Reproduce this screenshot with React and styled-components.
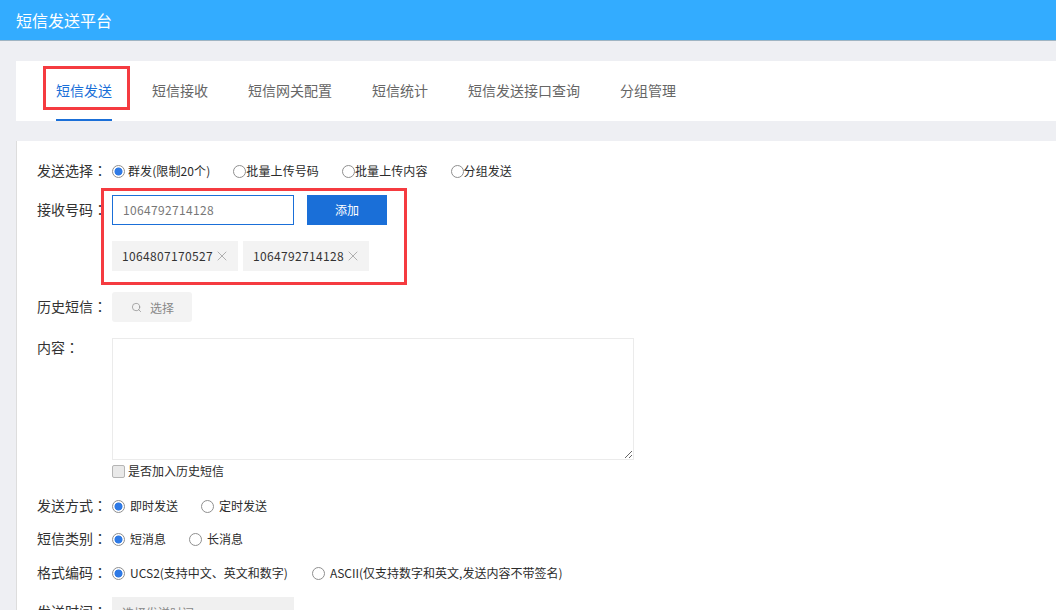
import React from "react";
import styled, { createGlobalStyle } from "styled-components";
import { Search, X } from "lucide-react";

const GlobalStyle = createGlobalStyle`
  html, body {
    margin: 0;
    height: 610px;
    overflow: hidden;
    background: #eeeff3;
    font-family: "Noto Sans CJK SC", "Open Sans", sans-serif;
    color: #333;
  }
  * { box-sizing: border-box; }
`;

const Header = styled.header`
  height: 41px;
  padding-left: 16px;
  display: flex;
  align-items: center;
  background: #33acff;
  border-bottom: 1px solid #9fb4c2;
  color: #fff;
  font-size: 16px;
`;

const Main = styled.main`
  padding: 20px 0 0 16px;
`;

const Tabs = styled.nav`
  height: 60px;
  padding-left: 40px;
  display: flex;
  gap: 40px;
  background: #fff;
`;

const Tab = styled.div`
  position: relative;
  height: 60px;
  line-height: 59px;
  font-size: 14px;
  color: ${(p) => (p.$active ? "#1a6fd8" : "#666")};
  border-bottom: 2px solid ${(p) => (p.$active ? "#1a6fd8" : "transparent")};
`;

const Mark = styled.span`
  position: absolute;
  border: 3px solid #f53b40;
  pointer-events: none;
`;

const TabMark = styled(Mark)`
  left: -13px;
  top: 5px;
  width: 87px;
  height: 44px;
`;

const ReceiverMark = styled(Mark)`
  left: -11px;
  top: -7px;
  width: 306px;
  height: 97px;
`;

const Panel = styled.section`
  margin-top: 20px;
  height: 480px;
  padding: 20px 0 0 20px;
  background: #fff;
  border-left: 1px solid #ddd;
`;

const Row = styled.div`
  display: flex;
  align-items: ${(p) => (p.$top ? "flex-start" : "center")};
  margin-top: ${(p) => p.$gap || 0}px;
  min-height: 20px;
`;

const LabelBox = styled.label`
  flex: none;
  width: 75px;
  padding-bottom: 2px;
  font-size: 14px;
  line-height: ${(p) => (p.$tall ? 28 : 18)}px;
  color: #333;
`;

// the colon sits in the middle of its cell in the reference, TC draws it so
const Colon = styled.span`
  font-family: "Noto Sans CJK TC", sans-serif;
`;

const Options = styled.div`
  display: flex;
  align-items: center;
  gap: ${(p) => p.$gap}px;
  letter-spacing: ${(p) => p.$spacing || 0}px;
`;

const Option = styled.label`
  display: flex;
  align-items: center;
  gap: ${(p) => p.$gap}px;
  font-size: 12px;
  line-height: 20px;
  color: #2b2b2b;
`;

const Radio = styled.input.attrs({ type: "radio" })`
  appearance: none;
  flex: none;
  width: 13px;
  height: 13px;
  margin: 0;
  border-radius: 50%;
  border: 1px solid #8f8f8f;
  background: ${(p) =>
    p.checked
      ? "radial-gradient(circle, #2f7ae5 0, #2f7ae5 3.6px, #fff 4.4px)"
      : "#fff"};
`;

const Check = styled.input.attrs({ type: "checkbox" })`
  appearance: none;
  flex: none;
  width: 13px;
  height: 13px;
  margin: 0 3px 0 0;
  border: 1px solid #b5b5b5;
  border-radius: 2px;
  background: #e9e9e9;
`;

const Receiver = styled.div`
  position: relative;
  display: flex;
  flex-direction: column;
  gap: 16px;
`;

const InputLine = styled.div`
  display: flex;
  gap: 13px;
`;

const NumberInput = styled.input`
  width: 182px;
  height: 30px;
  padding: 0 10px 2px;
  border: 1px solid #1a6fd8;
  outline: none;
  font: inherit;
  font-size: 12px;
  letter-spacing: 0.33px;
  color: #777;
`;

const AddButton = styled.button`
  width: 80px;
  height: 30px;
  border: 0;
  padding: 0 0 2px;
  background: #1a6fd8;
  color: #fff;
  font: inherit;
  font-size: 12px;
`;

const TagList = styled.div`
  display: flex;
  gap: 5px;
`;

const Tag = styled.div`
  width: 126px;
  height: 30px;
  padding: 0 0 2px 10px;
  display: flex;
  align-items: center;
  gap: 1px;
  background: #f3f3f3;
  font-size: 12px;
  letter-spacing: 0.33px;
  color: #333;
  svg { color: #aaa; margin-top: 1px; }
`;

const PickButton = styled.button`
  width: 80px;
  height: 30px;
  padding: 0 0 0 1px;
  display: flex;
  align-items: center;
  justify-content: center;
  gap: 8px;
  border: 0;
  border-radius: 3px;
  background: #f3f3f3;
  color: #888;
  font: inherit;
  font-size: 12px;
`;

const Content = styled.textarea`
  display: block;
  width: 522px;
  height: 122px;
  border: 1px solid #ebebeb;
  outline: none;
  background: #fff;
`;

const DateInput = styled.input`
  width: 182px;
  height: 30px;
  padding: 0 10px;
  border: 0;
  background: #f0f0f0;
  font: inherit;
  font-size: 12px;
  &::placeholder { color: #888; }
`;

const sendModes = ["即时发送", "定时发送"];
const smsTypes = ["短消息", "长消息"];
const encodings = ["UCS2(支持中文、英文和数字)", "ASCII(仅支持数字和英文,发送内容不带签名)"];
const targets = ["群发(限制20个)", "批量上传号码", "批量上传内容", "分组发送"];
const tabs = ["短信发送", "短信接收", "短信网关配置", "短信统计", "短信发送接口查询", "分组管理"];
const tags = ["1064807170527", "1064792714128"];

function Label({ text, tall }) {
  return (
    <LabelBox $tall={tall}>
      {text}
      <Colon>：</Colon>
    </LabelBox>
  );
}

function RadioGroup({ name, items, gap = 23, textGap = 5 }) {
  return (
    <Options $gap={gap}>
      {items.map((item, index) => (
        <Option key={item} $gap={textGap}>
          <Radio name={name} checked={index === 0} readOnly />
          {item}
        </Option>
      ))}
    </Options>
  );
}

export default function App() {
  return (
    <>
      <GlobalStyle />
      <Header>短信发送平台</Header>
      <Main>
        <Tabs>
          {tabs.map((tab, index) => (
            <Tab key={tab} $active={index === 0}>
              {tab}
              {index === 0 && <TabMark />}
            </Tab>
          ))}
        </Tabs>
        <Panel>
          <Row>
            <Label text="发送选择" />
            <Options $gap={23} $spacing={0.1}>
              {targets.map((item, index) => (
                <Option key={item} $gap={index === 0 ? 3 : 0}>
                  <Radio name="target" checked={index === 0} readOnly />
                  {item}
                </Option>
              ))}
            </Options>
          </Row>
          <Row $top $gap={14}>
            <Label text="接收号码" tall />
            <Receiver>
              <ReceiverMark />
              <InputLine>
                <NumberInput defaultValue="1064792714128" />
                <AddButton>添加</AddButton>
              </InputLine>
              <TagList>
                {tags.map((tag) => (
                  <Tag key={tag}>
                    {tag}
                    <X size={16} strokeWidth={1.4} />
                  </Tag>
                ))}
              </TagList>
            </Receiver>
          </Row>
          <Row $gap={21}>
            <Label text="历史短信" />
            <PickButton>
              <Search size={11} strokeWidth={1.5} />
              选择
            </PickButton>
          </Row>
          <Row $top $gap={16}>
            <Label text="内容" />
            <Content />
          </Row>
          <Row $gap={1}>
            <LabelBox />
            <Option $gap={0}>
              <Check />
              是否加入历史短信
            </Option>
          </Row>
          <Row $gap={15}>
            <Label text="发送方式" />
            <RadioGroup name="mode" items={sendModes} />
          </Row>
          <Row $gap={13}>
            <Label text="短信类别" />
            <RadioGroup name="type" items={smsTypes} />
          </Row>
          <Row $gap={14}>
            <Label text="格式编码" />
            <RadioGroup name="encoding" items={encodings} gap={24} />
          </Row>
          <Row $top $gap={14}>
            <Label text="发送时间" tall />
            <DateInput placeholder="选择发送时间" />
          </Row>
        </Panel>
      </Main>
    </>
  );
}
